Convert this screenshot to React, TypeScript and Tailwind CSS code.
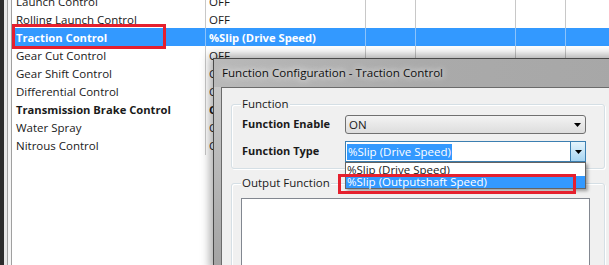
import React from "react";

type Row = { name: string; value: string; selected?: boolean; bold?: boolean };

const rows: Row[] = [
  { name: "Launch Control", value: "OFF" },
  { name: "Rolling Launch Control", value: "OFF" },
  { name: "Traction Control", value: "%Slip (Drive Speed)", selected: true, bold: true },
  { name: "Gear Cut Control", value: "OFF" },
  { name: "Gear Shift Control", value: "OFF" },
  { name: "Differential Control", value: "OFF" },
  { name: "Transmission Brake Control", value: "OFF", bold: true },
  { name: "Water Spray", value: "OFF" },
  { name: "Nitrous Control", value: "OFF" },
];

function Arrow() {
  return (
    <svg width="7" height="4" viewBox="0 0 7 4" className="block">
      <path d="M0 0h7L3.5 4z" fill="#000" />
    </svg>
  );
}

function TableRow({ row }: { row: Row }) {
  const line = row.selected ? "border-[#8cc3fa]" : "border-[#c8c8c8]";
  const text = row.selected ? "text-white" : "text-[#1a1a1a]";
  return (
    <div
      className={`flex h-[18px] items-center ${row.selected ? "bg-[#3399ff]" : ""} ${text} ${
        row.bold ? "text-[11.2px] font-bold" : ""
      }`}
    >
      <div className={`w-[194px] shrink-0 border-r pl-[4px] pt-[1px] leading-[18px] whitespace-nowrap ${line}`}>
        {row.name}
      </div>
      <div className={`w-[160px] shrink-0 border-r pl-[3px] pt-[1px] leading-[18px] whitespace-nowrap ${line}`}>
        {row.value}
      </div>
      <div className={`h-full w-[50px] shrink-0 border-r ${line}`} />
      <div className={`h-full w-[100px] shrink-0 border-r ${line}`} />
      <div className={`h-full w-[50px] shrink-0 border-r ${line}`} />
      <div className="h-full flex-1" />
    </div>
  );
}

function GroupBox({
  label,
  className,
  children,
}: {
  label: string;
  className: string;
  children: React.ReactNode;
}) {
  return (
    <div
      className={`relative rounded-[3px] border border-[#d5dfe5] shadow-[inset_1px_1px_0_#ffffff,1px_1px_0_#ffffff] ${className}`}
    >
      <span className="absolute left-[9px] top-[-9px] bg-[#f0f0f0] px-[1px] leading-[16px] text-[#1a1a1a]">
        {label}
      </span>
      {children}
    </div>
  );
}

export default function App() {
  return (
    <div className="relative flex h-[265px] w-[609px] overflow-hidden bg-white font-['Open_Sans','Noto_Sans',sans-serif] text-[11.5px]">
      <div className="w-[4px] shrink-0 bg-[#2b2b2b]" />
      <div className="w-[4px] shrink-0 border-r border-[#a0a0a0] bg-[#e6e6e6]" />
      <div className="w-[4px] shrink-0 border-r border-[#a0a0a0] bg-[#f4f4f4]" />

      <div className="mt-[-8px] flex flex-1 flex-col">
        {rows.map((r) => (
          <TableRow key={r.name} row={r} />
        ))}
      </div>

      {/* red annotation on the selected row */}
      <div className="absolute left-[12px] top-[24px] h-[25px] w-[154px] border-[3px] border-[#e5202e]" />

      {/* Function Configuration dialog */}
      <div className="absolute left-[213px] top-[58px] flex h-[215px] w-[410px] flex-col border-l border-t border-[#4a4a4a] bg-[#b3b3b3] shadow-[-3px_-3px_9px_rgba(0,0,0,0.35)]">
        <div className="flex h-[28px] shrink-0 items-center bg-gradient-to-r from-[#b9b9b9] via-[#aaaaaa] to-[#a7a7a7] pl-[8px]">
          <span className="whitespace-nowrap text-[11.6px] text-[#101010] [text-shadow:0_0_6px_rgba(255,255,255,0.95),0_0_12px_rgba(255,255,255,0.7)]">
            Function Configuration - Traction Control
          </span>
        </div>
        <div className="flex flex-1">
          <div className="w-[7px] shrink-0 bg-gradient-to-b from-[#c9c9c9] to-[#9c9c9c]" />
          <div className="flex-1 border-l border-t border-[#6b6b6b] bg-[#f0f0f0] pl-[9px] pt-[16px]">
            <GroupBox label="Function" className="h-[65px] w-[374px] pl-[10px] pt-[10px]">
              <div className="flex flex-col gap-[7px]">
                <div className="flex h-[19px] items-center">
                  <span className="w-[103px] shrink-0 text-[11px] font-bold text-[#1a1a1a]">Function Enable</span>
                  <div className="flex h-[19px] w-[241px] items-center justify-between rounded-[3px] border border-[#707070] bg-gradient-to-b from-[#f3f3f3] to-[#dddddd] pl-[3px] pr-[4px] text-[#1a1a1a]">
                    <span>ON</span>
                    <Arrow />
                  </div>
                </div>
                <div className="flex h-[21px] items-center">
                  <span className="w-[103px] shrink-0 text-[11px] font-bold text-[#1a1a1a]">Function Type</span>
                  <div className="relative flex h-[21px] w-[241px] items-center border border-[#3c7fb1] bg-white pl-[1px]">
                    <span className="bg-[#3399ff] px-[1px] leading-[16px] text-white">%Slip (Drive Speed)</span>
                    <div className="ml-auto flex h-full w-[15px] items-center justify-center border-l border-[#3c7fb1] bg-gradient-to-b from-[#e5f4fc] to-[#a7d5f2]">
                      <Arrow />
                    </div>
                    <div className="absolute left-[-1px] top-[20px] z-10 w-[241px] border border-[#646464] bg-white shadow-[2px_2px_3px_rgba(0,0,0,0.35)]">
                      <div className="h-[13px] pl-[1px] leading-[13px] text-[#1a1a1a]">%Slip (Drive Speed)</div>
                      <div className="h-[12px] bg-[#3399ff] pl-[1px] leading-[12px] text-white">
                        %Slip (Outputshaft Speed)
                      </div>
                    </div>
                  </div>
                </div>
              </div>
            </GroupBox>
            <GroupBox label="Output Function" className="mt-[14px] h-[120px] w-[374px] pl-[9px] pt-[14px]">
              <div className="h-[100px] w-[349px] border border-[#828790] bg-white" />
            </GroupBox>
          </div>
        </div>
      </div>

      {/* red annotation on the dropdown item */}
      <div className="absolute left-[338px] top-[174px] z-20 h-[20px] w-[238px] border-[3px] border-[#e5202e]" />
    </div>
  );
}
